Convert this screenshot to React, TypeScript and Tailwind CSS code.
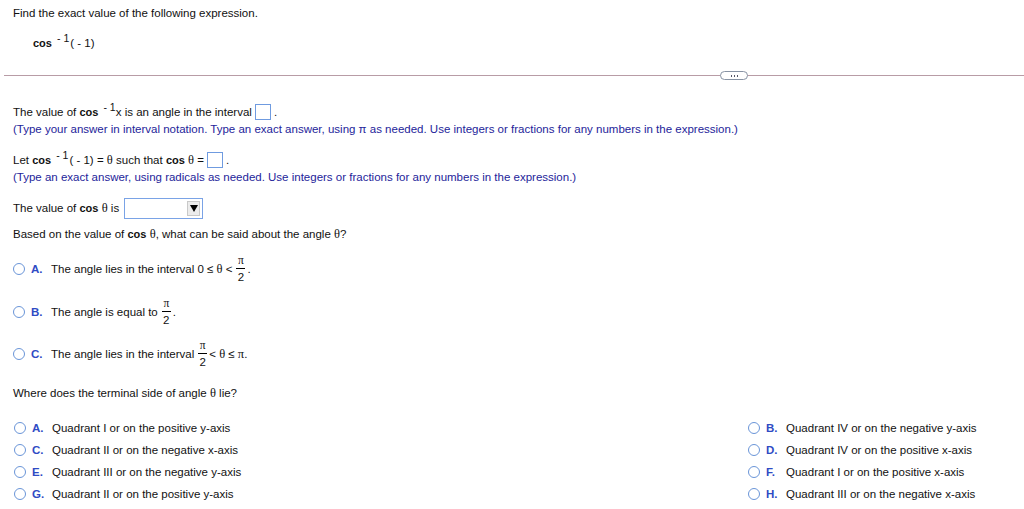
import React from "react";

const font = { fontFamily: '"Liberation Sans", Arial, sans-serif' };

function Inv({ arg }: { arg?: string }) {
  // cos⁻¹ with the raised, spaced exponent
  return (
    <>
      <b className="text-[11px]">cos</b>
      <span className="relative -top-[5px] ml-[5px] text-[10.5px]">-&nbsp;1</span>
      {arg ? <span className="ml-[1px]">{arg}</span> : null}
    </>
  );
}

function Theta() {
  return <span className="font-['Liberation_Serif',serif] text-[12.5px]">θ</span>;
}

function PiOver2() {
  return (
    <span className="ml-[4px] mr-[2px] inline-flex shrink-0 flex-col items-center">
      <span className="h-[11px] font-['Liberation_Serif',serif] text-[11.5px] leading-[11px]">π</span>
      <span className="mt-[2px] h-px w-[9px] shrink-0 bg-black" />
      <span className="mt-[2px] h-[12px] text-[11.5px] leading-[12px]">2</span>
    </span>
  );
}

function AnswerBox() {
  return <span className="mx-[3px] inline-block h-[16px] w-[16px] shrink-0 border border-[#6f9be0] bg-white" />;
}

function Radio({ letter, children }: { letter: string; children: React.ReactNode }) {
  return (
    <div className="flex h-[14px] items-center">
      <span className="h-[12px] w-[12px] shrink-0 rounded-full border border-[#6a95d8] bg-white" />
      <span className="ml-[6px] w-[20px] text-[11.5px] font-bold text-[#2f4bc4]">{letter}.</span>
      <span className="flex items-center whitespace-nowrap">{children}</span>
    </div>
  );
}

const leftAnswers = [
  ["A", "Quadrant I or on the positive y-axis"],
  ["C", "Quadrant II or on the negative x-axis"],
  ["E", "Quadrant III or on the negative y-axis"],
  ["G", "Quadrant II or on the positive y-axis"],
];

const rightAnswers = [
  ["B", "Quadrant IV or on the negative y-axis"],
  ["D", "Quadrant IV or on the positive x-axis"],
  ["F", "Quadrant I or on the positive x-axis"],
  ["H", "Quadrant III or on the negative x-axis"],
];

export default function App() {
  return (
    <div style={font} className="h-[509px] w-[1024px] overflow-hidden bg-white text-[11.5px] leading-[14px] text-[#111]">
      <div className="px-[13px] pt-[6px]">
        <div>Find the exact value of the following expression.</div>
        <div className="mt-[16px] flex h-[14px] items-center pl-[20px]">
          <Inv arg="( -&nbsp;1)" />
        </div>
      </div>

      {/* question / work area divider */}
      <div className="relative ml-[4px] mt-[25px] h-px bg-[#b89ca6]">
        <div className="absolute left-[716px] top-[-4px] flex h-[9px] w-[28px] items-center justify-center gap-[2px] rounded-full border border-[#8893a4] bg-white">
          <span className="h-[2px] w-px bg-[#556]" />
          <span className="h-[2px] w-px bg-[#556]" />
          <span className="h-[2px] w-px bg-[#556]" />
        </div>
      </div>

      <div className="px-[13px]">
        <div className="mt-[29px] flex h-[14px] items-center whitespace-nowrap">
          <span>The value of&nbsp;</span>
          <Inv />
          <span>x is an angle in the interval</span>
          <AnswerBox />
          <span>.</span>
        </div>
        <div className="mt-[3px] text-[#24249a]">
          (Type your answer in interval notation. Type an exact answer, using π as needed. Use integers or fractions for any numbers in the expression.)
        </div>

        <div className="mt-[17px] flex h-[14px] items-center whitespace-nowrap">
          <span>Let&nbsp;</span>
          <b className="text-[11px]">cos</b>
          <span className="relative -top-[5px] ml-[5px] text-[10.5px]">-&nbsp;1</span>
          <span className="ml-[1px]">(&nbsp;-&nbsp;1)&nbsp;=&nbsp;</span>
          <Theta />
          <span>&nbsp;such that&nbsp;</span>
          <b className="text-[11px]">cos</b>
          <span>&nbsp;</span>
          <Theta />
          <span>&nbsp;=</span>
          <AnswerBox />
          <span>.</span>
        </div>
        <div className="mt-[3px] text-[#24249a]">
          (Type an exact answer, using radicals as needed. Use integers or fractions for any numbers in the expression.)
        </div>

        <div className="mt-[17px] flex h-[14px] items-center whitespace-nowrap">
          <span>The value of&nbsp;</span>
          <b className="text-[11px]">cos</b>
          <span>&nbsp;</span>
          <Theta />
          <span>&nbsp;is</span>
          <div className="ml-[5px] flex h-[21px] w-[79px] shrink-0 items-center justify-end border border-[#7aa3e6] bg-white pr-[2px]">
            <div className="flex h-[15px] w-[13px] items-center justify-center border border-[#c9c9c9] bg-[#ececec]">
              <svg width="8" height="7" viewBox="0 0 8 7">
                <path d="M0 0h8L4 7z" fill="#000" />
              </svg>
            </div>
          </div>
        </div>

        <div className="mt-[12px] flex h-[14px] items-center whitespace-nowrap">
          <span>Based on the value of&nbsp;</span>
          <b className="text-[11px]">cos</b>
          <span>&nbsp;</span>
          <Theta />
          <span>, what can be said about the angle&nbsp;</span>
          <Theta />
          <span>?</span>
        </div>

        <div className="mt-[21px]">
          <Radio letter="A">
            <span>The angle lies in the interval 0 ≤&nbsp;</span>
            <Theta />
            <span>&nbsp;&lt;</span>
            <PiOver2 />
            <span>.</span>
          </Radio>
        </div>
        <div className="mt-[29px]">
          <Radio letter="B">
            <span>The angle is equal to</span>
            <PiOver2 />
            <span>.</span>
          </Radio>
        </div>
        <div className="mt-[28px]">
          <Radio letter="C">
            <span>The angle lies in the interval</span>
            <PiOver2 />
            <span>&lt;&nbsp;</span>
            <Theta />
            <span>&nbsp;≤&nbsp;</span>
            <span className="font-['Liberation_Serif',serif] text-[12.5px]">π</span>
            <span>.</span>
          </Radio>
        </div>

        <div className="mt-[25px] flex h-[14px] items-center">
          <span>Where does the terminal side of angle&nbsp;</span>
          <Theta />
          <span>&nbsp;lie?</span>
        </div>

        <div className="mt-[21px] flex pl-px">
          <div className="flex w-[734px] flex-col gap-[8px]">
            {leftAnswers.map(([l, t]) => (
              <Radio key={l} letter={l}>
                {t}
              </Radio>
            ))}
          </div>
          <div className="flex flex-col gap-[8px]">
            {rightAnswers.map(([l, t]) => (
              <Radio key={l} letter={l}>
                {t}
              </Radio>
            ))}
          </div>
        </div>
      </div>
    </div>
  );
}
